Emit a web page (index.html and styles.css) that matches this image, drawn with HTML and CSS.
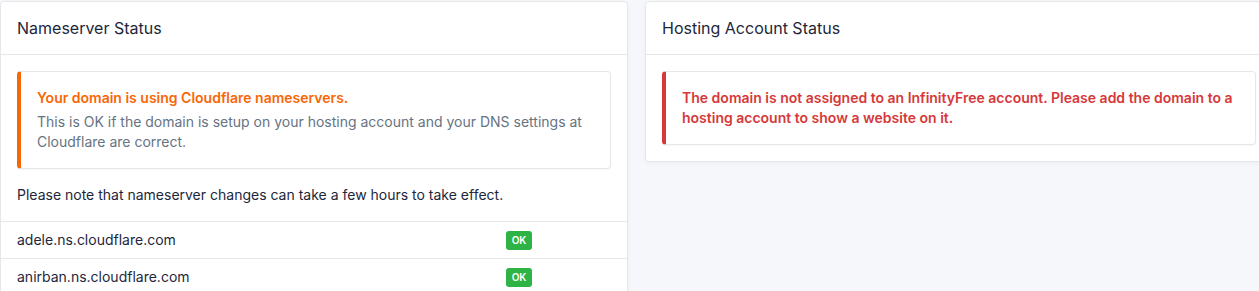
FILE: index.html
```html
<!DOCTYPE html>
<html lang="en">
<head>
    <meta charset="UTF-8">
    <meta name="viewport" content="width=device-width, initial-scale=1.0">
    <title>Domain Status</title>
    <link rel="stylesheet" href="styles.css">
</head>
<body>
    <div class="page">
        <!-- Nameserver card -->
        <div class="card">
            <div class="card-header">
                <h3 class="card-title">Nameserver Status</h3>
            </div>
            <div class="card-body">
                <div class="alert alert-warning">
                    <h4 class="alert-title">Your domain is using Cloudflare nameservers.</h4>
                    <div class="alert-text">This is OK if the domain is setup on your hosting account and your DNS settings at Cloudflare are correct.</div>
                </div>
                <p>Please note that nameserver changes can take a few hours to take effect.</p>
            </div>
            <div class="ns-list">
                <div class="ns-row">
                    <span>adele.ns.cloudflare.com</span>
                    <span><span class="badge">OK</span></span>
                </div>
                <div class="ns-row">
                    <span>anirban.ns.cloudflare.com</span>
                    <span><span class="badge">OK</span></span>
                </div>
            </div>
        </div>

        <!-- Hosting card -->
        <div class="card card-short">
            <div class="card-header">
                <h3 class="card-title">Hosting Account Status</h3>
            </div>
            <div class="card-body">
                <div class="alert alert-danger">
                    <div class="alert-strong">The domain is not assigned to an InfinityFree account. Please add the domain to a hosting account to show a website on it.</div>
                </div>
            </div>
        </div>
    </div>
</body>
</html>
```

FILE: styles.css
```css
* {
    margin: 0;
    padding: 0;
    box-sizing: border-box;
}

body {
    font-family: Inter, 'Noto Sans', sans-serif;
    font-size: 14px;
    line-height: 20px;
    color: #1d273b;
    background: #f5f7fb;
    overflow: hidden;
}

.page {
    display: grid;
    grid-template-columns: 628px 628px;
    column-gap: 17px;
    align-items: start;
    padding-top: 1px;
}

.card {
    background: white;
    border: 1px solid #e6e7e9;
    border-radius: 4px;
    box-shadow: 0 2px 4px rgba(29, 39, 59, 0.04);
}

.card-header {
    height: 53px;
    padding: 0 16px;
    display: flex;
    align-items: center;
    border-bottom: 1px solid #e6e7e9;
}

.card-title {
    font-size: 16px;
    font-weight: 400;
    line-height: 24px;
    color: #1d273b;
}

.card-body {
    padding: 16px;
}

.alert {
    background: white;
    border: 1px solid #e6e7e9;
    border-left-width: 4px;
    border-radius: 4px;
    padding: 16px;
    margin-bottom: 16px;
    box-shadow: 0 1px 2px rgba(29, 39, 59, 0.04);
}

.card-short .alert {
    margin-bottom: 0;
}

.alert-warning {
    border-left-color: #f76707;
}

.alert-danger {
    border-left-color: #d63939;
}

.alert-title {
    font-size: 14px;
    font-weight: 600;
    color: #f76707;
    margin-bottom: 4px;
}

.alert-text {
    color: #667382;
}

.alert-strong {
    font-weight: 600;
    color: #d63939;
}

.ns-row {
    display: grid;
    grid-template-columns: 1fr 105px;
    align-items: center;
    height: 37px;
    padding: 0 16px;
    border-top: 1px solid #e6e7e9;
}

.badge {
    display: block;
    background: #2fb344;
    color: white;
    font-size: 10px;
    font-weight: 600;
    line-height: 19px;
    width: 26px;
    text-align: center;
    border-radius: 3px;
}
```
